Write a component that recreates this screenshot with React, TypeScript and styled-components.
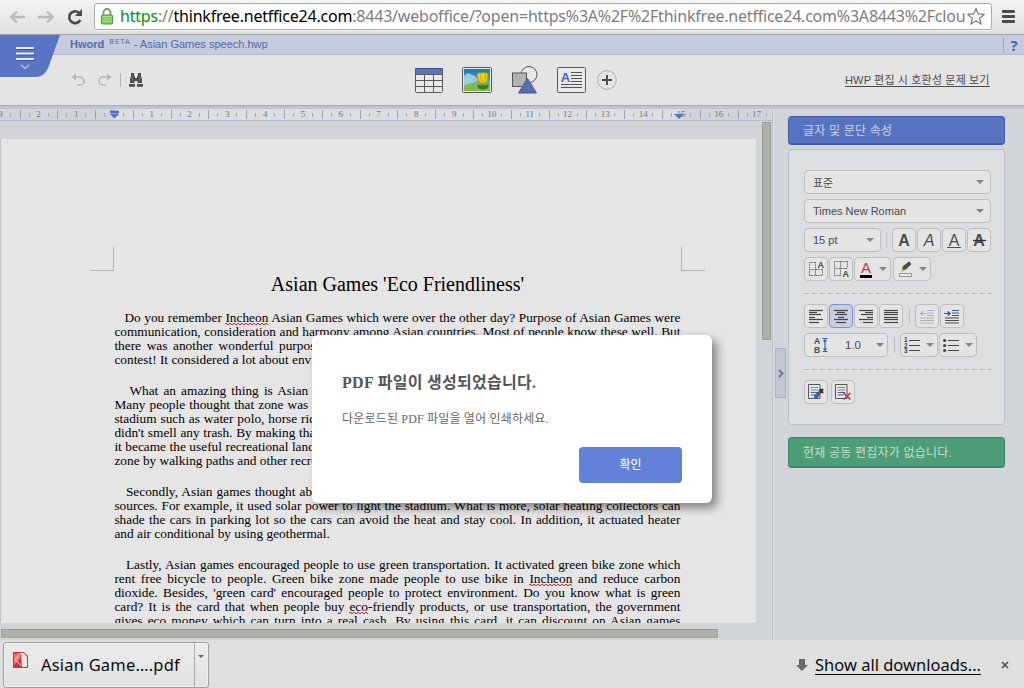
import React from "react";
import styled, { createGlobalStyle, css } from "styled-components";

const KR = `"Liberation Sans", "Noto Sans CJK KR", sans-serif`;

const Global = createGlobalStyle`
  * { box-sizing: border-box; }
  body { margin: 0; overflow: hidden; background: #d1d5d8; }
  svg { display: block; flex: none; }
`;

const Window = styled.div`
  width: 1024px;
  height: 688px;
  display: flex;
  flex-direction: column;
  overflow: hidden;
  position: relative;
  font-family: ${KR};
`;

/* ---------- browser bar ---------- */
const BrowserBar = styled.div`
  height: 35px;
  flex: none;
  display: flex;
  align-items: flex-start;
  padding: 3px 0 0 9px;
  background: linear-gradient(#f4f4f4, #dfdfdf);
  border-bottom: 1px solid #a7a7a7;
`;
const NavIcons = styled.div`
  display: flex;
  width: 85px;
  height: 28px;
  align-items: center;
  gap: 12px;
`;
const Address = styled.div`
  width: 898px;
  height: 27px;
  display: flex;
  align-items: center;
  border: 1px solid #a9a9a9;
  border-radius: 3px;
  background: #fff;
  padding: 0 2px 0 6px;
  box-shadow: 0 1px 0 #f5f5f5;
`;
const Url = styled.div`
  width: 846px;
  margin-left: 7px;
  overflow: hidden;
  white-space: nowrap;
  font: 16px/25px "Noto Sans", "Open Sans", sans-serif;
  letter-spacing: -0.21px;
  color: #7d7d7d;
`;
const Scheme = styled.span`color: #0a9208;`;
const Host = styled.span`color: #000;`;
const MenuBars = styled.div`
  display: flex;
  flex-direction: column;
  gap: 2px;
  margin: 7px 0 0 10px;
`;
const MenuBar = styled.i`
  width: 13px;
  height: 3px;
  border-radius: 1px;
  background: #4b4b4b;
`;

/* ---------- application head ---------- */
const Head = styled.div`
  height: 71px;
  flex: none;
  position: relative;
  background: #e4e4e4;
  border-bottom: 1px solid #a3abbb;
`;
const TitleBar = styled.div`
  height: 20px;
  display: flex;
  align-items: center;
  justify-content: space-between;
  padding-left: 70px;
  background: #c6cbdd;
  border-bottom: 1px solid #b2bbd1;
  color: #5369a8;
  font-size: 11px;
  line-height: 18px;
`;
const Title = styled.div`
  white-space: nowrap;
  padding-bottom: 1px;
`;
const Beta = styled.span`
  font: 7px/7px "DejaVu Sans", sans-serif;
  letter-spacing: 0.9px;
  vertical-align: 4px;
  margin: 0 0 0 2px;
`;
const Help = styled.div`
  width: 21px;
  height: 16px;
  border-left: 1px solid #9ba7c8;
  text-align: center;
  font: bold 15px/17px "Open Sans", sans-serif;
  color: #4560a8;
`;
const MenuTab = styled.div`
  position: absolute;
  left: 0;
  top: 0;
`;
const Tools = styled.div`
  height: 50px;
  display: flex;
  align-items: center;
  padding-left: 71px;
`;
const QuickTools = styled.div`
  display: flex;
  align-items: center;
  width: 344px;
`;
const InsertTools = styled.div`
  display: flex;
  align-items: center;
  width: 430px;
`;
const IssueLink = styled.span`
  font-size: 11px;
  line-height: 12px;
  letter-spacing: 0.15px;
  white-space: nowrap;
  color: #4d4d4d;
  border-bottom: 1px solid #4d4d4d;
`;

/* ---------- workspace ---------- */
const Workspace = styled.div`
  height: 534px;
  flex: none;
  display: flex;
  background: #d1d5d8;
  border-top: 3px solid #bfc6d1;
`;
const Editor = styled.div`
  width: 773px;
  border-right: 1px solid #b9bfca;
  display: flex;
  flex-direction: column;
`;
const Ruler = styled.div`
  height: 12px;
  flex: none;
  position: relative;
  overflow: hidden;
  border-bottom: 1px solid #b4bdd0;
  background: linear-gradient(90deg, #d1d5d8 114px, #dddee0 114px, #dddee0 680px, #d1d5d8 680px);
`;
const RulerTrack = styled.div`
  display: flex;
  margin-left: -18.3px;
  width: 900px;
`;
const RulerCell = styled.div`
  width: 37.8px;
  height: 11px;
  flex: none;
  display: flex;
  align-items: center;
  background: linear-gradient(#97a0b4, #97a0b4) 0 1px / 1px 9px no-repeat,
    linear-gradient(#a5adbd, #a5adbd) 9px 4px / 1px 4px no-repeat,
    linear-gradient(#a5adbd, #a5adbd) 28px 4px / 1px 4px no-repeat;
  font: 9px/11px "Liberation Serif", serif;
  color: #777;
`;
const RulerNumber = styled.span`width: 100%; text-align: center;`;
const RulerMark = styled.div<{ $x: number; $y?: number }>`
  position: absolute;
  left: ${(p) => p.$x}px;
  top: ${(p) => p.$y ?? 0}px;
`;
const Canvas = styled.div`
  flex: 1;
  display: flex;
  justify-content: space-between;
  min-height: 0;
`;
const Page = styled.div`
  width: 756px;
  height: 484px;
  margin-top: 18px;
  overflow: hidden;
  background: #e5e5e5;
  border-left: 1px solid #bcc3cf;
  padding: 108px 51px 0 89px;
  font: 13.333px/14px "Liberation Serif", serif;
  color: #000;
`;
const Corners = styled.div`
  display: flex;
  justify-content: space-between;
`;
const Corner = styled.i<{ $side: "left" | "right" }>`
  width: 24px;
  height: 24px;
  border-bottom: 1px solid #b2b2b2;
  ${(p) => (p.$side === "left" ? css`border-right: 1px solid #b2b2b2;` : css`border-left: 1px solid #b2b2b2;`)}
`;
const Heading = styled.div`
  font-size: 20px;
  line-height: 26px;
  text-align: center;
`;
const TextColumn = styled.div`
  width: 566px;
  margin: 14px 0 0 24.4px;
`;
const Paragraph = styled.div<{ $after: number }>`
  margin-bottom: ${(p) => p.$after}px;
`;
const Line = styled.div<{ $indent?: number; $gap?: number }>`
  height: 14px;
  white-space: nowrap;
  padding-left: ${(p) => p.$indent ?? 0}px;
  ${(p) => (p.$gap === undefined ? css`white-space: normal; text-align-last: justify;` : css`word-spacing: ${p.$gap}px;`)}
`;
const Misspelt = styled.span`
  background:
    linear-gradient(#d8232b, #d8232b) 0 calc(100% - 1px) / 4px 1px repeat-x,
    linear-gradient(90deg, #d8232b 2px, transparent 2px) 0 100% / 4px 1px repeat-x;
  background:
    linear-gradient(90deg, #d8232b 2px, transparent 2px) 0 calc(100% - 1px) / 4px 1px repeat-x,
    linear-gradient(90deg, transparent 2px, #d8232b 2px) 0 100% / 4px 1px repeat-x;
`;
const VScroll = styled.div`
  width: 9px;
  height: 218px;
  margin: 1px 1px 0 0;
  background: #aeb1a9;
  border: 1px solid #9a9d98;
`;
const HScroll = styled.div`
  width: 717px;
  height: 9px;
  flex: none;
  margin: 0 0 2px 1px;
  background: #aeb1a9;
  border: 1px solid #9a9d98;
  border-bottom-color: #a5a8a2;
`;

/* ---------- side panel ---------- */
const Side = styled.div`
  flex: 1;
  display: flex;
  border-left: 1px solid #e3e5e7;
`;
const Collapse = styled.div`
  width: 11px;
  height: 50px;
  margin: 239px 2px 0 1px;
  border: 1px solid #a9b3c9;
  background: #c0c7d3;
  display: flex;
  align-items: center;
  justify-content: center;
`;
const SideColumn = styled.div`
  width: 217px;
  padding-top: 7px;
`;
const Banner = styled.div<{ $tone: "blue" | "green" }>`
  border-radius: 4px;
  padding-left: 14px;
  font-size: 12px;
  letter-spacing: 0.2px;
  white-space: nowrap;
  ${(p) =>
    p.$tone === "blue"
      ? css`
          height: 29px;
          line-height: 28px;
          color: #ccd4ea;
          background: #5673c1;
          border: 1px solid #405aa5;
          border-bottom-width: 2px;
        `
      : css`
          height: 31px;
          line-height: 30px;
          color: #c3decf;
          background: #4d9e77;
          border: 1px solid #35866a;
          border-bottom-width: 2px;
        `}
`;
const Panel = styled.div`
  height: 276px;
  margin: 4px 0 12px;
  padding: 20px 12px 0 15px;
  border: 1px solid #b9bfca;
  border-radius: 4px;
  background: #dddee0;
`;
const Row = styled.div<{ $gap?: number }>`
  display: flex;
  gap: ${(p) => p.$gap ?? 1}px;
  height: 24px;
  margin-bottom: 5px;
`;
const Separator = styled.i<{ $pad: number }>`
  width: 1px;
  height: 16px;
  margin: 4px ${(p) => p.$pad}px;
  background: #b7bcc6;
`;
const Dashes = styled.div`
  height: 1px;
  margin: 12px 0 10px;
  background: repeating-linear-gradient(90deg, #b4bac6 0 5px, transparent 5px 8px);
`;
const Control = styled.div<{ $w?: number; $on?: boolean; $text?: boolean }>`
  width: ${(p) => p.$w ?? 24}px;
  height: 24px;
  flex: none;
  display: flex;
  align-items: center;
  justify-content: ${(p) => (p.$w ? "space-between" : "center")};
  padding: ${(p) => (p.$text ? "0 6px 0 8px" : p.$w ? "0 3px" : "0")};
  border: 1px solid ${(p) => (p.$on ? "#7b90d6" : "#bdbec0")};
  border-radius: 4px;
  background: ${(p) => (p.$on ? "#c9cfe2" : "#e4e4e4")};
  color: #4b4b4b;
  font-size: 11px;
  white-space: nowrap;
`;
const Arrow = styled.i`
  border: 4px solid transparent;
  border-top-color: #858585;
  border-bottom: 0;
`;

/* ---------- download shelf ---------- */
const Shelf = styled.div`
  flex: 1;
  display: flex;
  justify-content: space-between;
  background: #dfdfdf;
  padding: 2px 15px 0 3px;
  font: 16.5px/22px "Noto Sans", "Open Sans", sans-serif;
  color: #0c0c0c;
`;
const Download = styled.div`
  width: 206px;
  height: 46px;
  display: flex;
  border: 1px solid #9c9c9c;
  border-radius: 3px;
  background: linear-gradient(#ebebeb, #e2e2e2);
  box-shadow: inset 0 0 0 1px #f1f1f1;
`;
const FileName = styled.div`
  width: 191px;
  display: flex;
  gap: 13px;
  padding: 9px 0 0 9px;
  border-right: 1px solid #ababab;
  white-space: nowrap;
`;
const FileText = styled.span`
  padding-top: 2px;
  letter-spacing: 0.2px;
`;
const DownloadMore = styled.div`padding: 12px 0 0 3px;`;
const SmallArrow = styled.i`
  display: block;
  border: 3px solid transparent;
  border-top-color: #666;
  border-bottom: 0;
`;
const ShelfActions = styled.div`
  display: flex;
  align-items: center;
  height: 46px;
`;
const ShowAll = styled.span`
  margin: 0 20px 0 7px;
  line-height: 18px;
  white-space: nowrap;
  border-bottom: 1px solid #0c0c0c;
`;

/* ---------- dialog ---------- */
const Dialog = styled.div`
  position: absolute;
  left: 312px;
  top: 335px;
  width: 400px;
  height: 168px;
  padding: 36px 30px 20px;
  display: flex;
  flex-direction: column;
  border-radius: 6px;
  background: #fff;
  box-shadow: 5px 5px 10px rgba(0, 0, 0, 0.42);
  font-family: "Liberation Serif", "Noto Sans CJK KR", serif;
  color: #555;
  white-space: nowrap;
`;
const DialogTitle = styled.div`
  font-size: 16px;
  font-weight: bold;
  line-height: 24px;
  letter-spacing: 0.28px;
`;
const DialogText = styled.div`
  margin-top: 15px;
  font-size: 12px;
  line-height: 18px;
  letter-spacing: 0.18px;
  color: #666;
`;
const Confirm = styled.button`
  width: 103px;
  height: 36px;
  margin: auto 0 0 auto;
  padding: 1px 0 0;
  flex: none;
  border: 0;
  border-radius: 4px;
  background: #6282d9;
  color: #fff;
  font: 12px/35px ${KR};
`;

/* ---------- icons ---------- */
const NavArrow = ({ forward = false }: { forward?: boolean }) => (
  <svg width="17" height="16" viewBox="0 0 17 16" fill="none" stroke="#b9b9b9" strokeWidth="2.4">
    {forward ? <path d="M0 8h14M9 2.5 14.7 8 9 13.500" /> : <path d="M16 8H2M8 2.500 2.300 8 8 13.500" />}
  </svg>
);
const Reload = () => (
  <svg width="17" height="16" viewBox="0 0 17 16">
    <path d="M13.300 11A5.900 5.900 0 1 1 12 3.700" fill="none" stroke="#4d4d4d" strokeWidth="2.700" />
    <path d="M15 0v7H8z" fill="#4d4d4d" />
  </svg>
);
const Lock = () => (
  <svg width="12" height="17" viewBox="0 0 12 17">
    <path d="M2.500 8V4.500a3.500 3.500 0 0 1 7 0V8" fill="none" stroke="#8b8b8b" strokeWidth="1.800" />
    <rect x=".5" y="7" width="11" height="9" rx="1" fill="#82c95a" stroke="#509b37" />
    <path d="M1.500 8.500h9M1.500 11h9M1.500 13.500h9" stroke="#abdf86" />
  </svg>
);
const Star = () => (
  <svg width="20" height="20" viewBox="0 0 20 20" fill="#fff" stroke="#777" strokeWidth="1.200" strokeLinejoin="round">
    <path d="m10 1.500 2.300 5.400 5.900.5-4.500 3.900 1.400 5.800-5.100-3-5.100 3 1.400-5.800L1.800 7.400l5.900-.5z" />
  </svg>
);
const TabShape = () => (
  <svg width="61" height="42" viewBox="0 0 61 42">
    <path d="M0 0h60L48.500 32Q45 42 35 42H0z" fill="#5874c2" />
    <path d="M17 14h18M17 19.500h18M17 25h18" stroke="#3f5698" strokeWidth="2" />
    <path d="M16 13h18M16 18.500h18M16 24h18" stroke="#e5e9f4" strokeWidth="2" />
    <path d="m21 30 4 3.500 4-3.500" fill="none" stroke="#b8c4e6" strokeWidth="1.300" />
  </svg>
);
const Undo = ({ flip = false }: { flip?: boolean }) => (
  <svg width="14" height="14" viewBox="0 0 14 14">
    <g transform={flip ? "translate(14 0) scale(-1 1)" : undefined}>
      <path d="M3 4h6a4 4 0 0 1 0 8H6" fill="none" stroke="#b6b6b6" strokeWidth="1.500" />
      <path d="M5 .5v7L.5 4z" fill="#b6b6b6" />
    </g>
  </svg>
);
const Binoculars = () => (
  <svg width="14" height="14" viewBox="0 0 14 14" fill="#4b4b4b">
    <path d="M2 0h3v3h1v2h2V3h1V0h3v3l1 4v3H8.500V8h-3v2H1V7l1-4zM0 11h6v2.700H0zM8 11h6v2.700H8z" />
    <path d="M3.500 3v5M10.500 3v5" stroke="#777" strokeWidth=".7" />
  </svg>
);
const TableIcon = () => (
  <svg width="28" height="25" viewBox="0 0 28 25">
    <rect x=".5" y=".5" width="27" height="24" rx="1" fill="#e9e9e9" stroke="#5a5a5a" />
    <path d="M1 1h26v5.500H1z" fill="#5b76b5" />
    <path d="M.5 6.500h27M.5 12.500h27M.5 18.500h27M9.500 6.500v18M18.500 6.500v18" stroke="#5a5a5a" />
    <path d="M.5 6V.5h27V6" fill="none" stroke="#3e548d" />
  </svg>
);
const PictureIcon = () => (
  <svg width="30" height="26" viewBox="0 0 30 26">
    <defs>
      <linearGradient id="sky" x1="0" y1="0" x2="0" y2="1">
        <stop offset="0" stopColor="#1279b5" />
        <stop offset="1" stopColor="#82c4de" />
      </linearGradient>
    </defs>
    <rect x=".5" y=".5" width="29" height="25" rx="1" fill="#e8e8e8" stroke="#555" />
    <path d="M2 2h26v22H2z" fill="url(#sky)" />
    <path d="M2 9q4-5 8-1 5 1 6 6l-14 5z" fill="#9fcbe0" />
    <path d="M2 19q9-6 26-2v7H2z" fill="#82b84d" />
    <path d="M21 15v8M16 18q0 4 5 4 5 0 5-4-4 0-5 3-1-3-5-3" fill="#397d21" stroke="#397d21" strokeWidth="1.200" />
    <path d="M15 7q2-2 4-1 2-1 4 0 2-1 3 1l-.5 7-3 2.500h-3L16 14z" fill="#ecd10b" stroke="#a68500" strokeWidth=".7" />
    <path d="M18.500 7q0 7 2.500 8M23.500 7q0 7-2.500 8" fill="none" stroke="#c9a900" />
  </svg>
);
const ShapesIcon = () => (
  <svg width="26" height="28" viewBox="0 0 26 28">
    <circle cx="17" cy="8.500" r="8" fill="#e7e7e7" stroke="#555" />
    <rect x=".5" y="7" width="14" height="13.500" fill="#b1b1b1" stroke="#555" />
    <path d="M15.500 12.500 24.500 27h-18z" fill="#5870ad" stroke="#3d558f" />
  </svg>
);
const TextBoxIcon = () => (
  <svg width="29" height="26" viewBox="0 0 29 26">
    <rect x=".5" y=".5" width="28" height="25" rx="1" fill="#e8e8e8" stroke="#555" />
    <path d="M14 5.500h11M14 8.500h11M14 11.500h11M14 14.500h11M4 17.500h21M4 20.500h21" stroke="#555" />
    <text x="3.700" y="15" fontFamily="Liberation Sans, sans-serif" fontWeight="700" fontSize="13" fill="#4763b5">A</text>
  </svg>
);
const PlusIcon = () => (
  <svg width="20" height="20" viewBox="0 0 20 20" fill="none">
    <circle cx="10" cy="10" r="9.300" stroke="#aaa" />
    <path d="M10 5v10M5 10h10" stroke="#505050" strokeWidth="2" />
  </svg>
);
const LetterA = ({ kind }: { kind: "bold" | "italic" | "under" | "strike" }) => (
  <svg width="18" height="20" viewBox="0 0 18 20">
    <text
      x="9" y="16" textAnchor="middle" fontFamily="Liberation Sans, sans-serif" fontSize="16" fill="#4b4b4b"
      fontWeight={kind === "bold" || kind === "strike" ? 700 : 400}
      fontStyle={kind === "italic" ? "italic" : "normal"}
    >A</text>
    {kind === "under" && <path d="M2 17.500h14" stroke="#4b4b4b" />}
    {kind === "strike" && <path d="M3 10.500h13" stroke="#333" strokeWidth="1.300" />}
  </svg>
);
const GridA = ({ low = false }: { low?: boolean }) => (
  <svg width="18" height="18" viewBox="0 0 18 18">
    <g fill="none" stroke="#6e6e6e" strokeDasharray="1.500 .8">
      {low ? (
        <path d="M2.500 1v15M8.500 1v15M15.500 1v7M2 1.500h14M2 8.500h14M2 15.500h7" />
      ) : (
        <path d="M2.500 2v14M8.500 2v14M15.500 9v7M2 2.500h7M2 9.500h14M2 15.500h14" />
      )}
    </g>
    <text x="10.500" y={low ? 17 : 7.500} fontFamily="Liberation Sans, sans-serif" fontWeight="700" fontSize="9" fill="#4b4b4b">A</text>
  </svg>
);
const FontColor = () => (
  <svg width="16" height="19" viewBox="0 0 16 19">
    <text x="8" y="12.500" textAnchor="middle" fontFamily="Liberation Sans, sans-serif" fontSize="15" fill="#b03c40">A</text>
    <path d="M2 15h12v3H2z" fill="#000" />
  </svg>
);
const Highlighter = () => (
  <svg width="16" height="18" viewBox="0 0 16 18">
    <path d="M12 1.500 14.500 4 9 9.500l-3 .5-1-1 1-3z" fill="#4d4d4d" />
    <path d="M5 9.500 3 11.500h4l1-1z" fill="#8bdc5e" />
    <rect x="2.500" y="13.500" width="12" height="3" fill="#eee" stroke="#999" />
  </svg>
);
const AlignIcon = ({ kind }: { kind: "left" | "center" | "right" | "full" }) => {
  const widths = kind === "full" ? [14, 14, 14, 14, 14, 14] : [14, 8, 12, 6, 14, 10];
  return (
    <svg width="14" height="16" viewBox="0 0 14 16" stroke="#454545" strokeWidth="1.200">
      {widths.map((w, i) => {
        const x = kind === "right" ? 14 - w : kind === "center" ? (14 - w) / 2 : 0;
        return <path key={i} d={`M${x} ${Math.round(i * 2.4 + 1.5) + 0.5}h${w}`} />;
      })}
    </svg>
  );
};
const IndentIcon = ({ off = false }: { off?: boolean }) => {
  const ink = off ? "#b2b2b2" : "#454545";
  const blue = off ? "#aab3d0" : "#3d59a7";
  return (
    <svg width="16" height="16" viewBox="0 0 16 16">
      <path d="M8 2.500h7M8 5h7M8 7.500h7" stroke={blue} strokeWidth="1.200" />
      <path d="M1 10h14M1 12.500h14M1 15h14" stroke={ink} strokeWidth="1.200" />
      <path d={off ? "M7 5.500H2M3.500 3.500v4L1 5.500z" : "M0 5.500h5M4 3.500v4L6.500 5.500z"} fill={blue} stroke={blue} />
    </svg>
  );
};
const LineHeight = () => (
  <svg width="16" height="16" viewBox="0 0 16 16">
    <g fontFamily="Liberation Sans, sans-serif" fontWeight="700" fontSize="8.500" fill="#4b4b4b">
      <text x="0" y="7">A</text>
      <text x="0" y="15.500">B</text>
    </g>
    <path d="M8.500 1.500h5M8.500 14.500h5M11 2v12M9.500 4.500 11 3l1.500 1.500M9.500 11.500 11 13l1.500-1.500" fill="none" stroke="#3f60a9" strokeWidth="1.200" />
  </svg>
);
const ListIcon = ({ numbered = false }: { numbered?: boolean }) => (
  <svg width="17" height="16" viewBox="0 0 17 16">
    <path d="M5 3.500h11M5 8.500h11M5 13.500h11" stroke="#454545" />
    {numbered ? (
      <g fontFamily="Liberation Sans, sans-serif" fontWeight="700" fontSize="6.500" fill="#454545">
        <text x="0" y="5">1</text><text x="0" y="10.500">2</text><text x="0" y="16">3</text>
      </g>
    ) : (
      <g fill="#454545"><circle cx="1.600" cy="3.500" r="1.600" /><circle cx="1.600" cy="8.500" r="1.600" /><circle cx="1.600" cy="13.500" r="1.600" /></g>
    )}
  </svg>
);
const StyleDoc = ({ remove = false }: { remove?: boolean }) => (
  <svg width="18" height="18" viewBox="0 0 18 18">
    <path d="M1.500 1.500h11.500v14H1.500z" fill="#e8e8e8" stroke="#555" />
    <path d="M3.500 4.500h7.500M3.500 7h7.500" stroke="#888" />
    <path d="M3.500 9.500h7.500M3.500 12h6" stroke="#4662ae" />
    {remove ? (
      <path d="m9.500 10 7 6.500M16.500 10l-7 6.500" stroke="#b43b3f" strokeWidth="1.700" />
    ) : (
      <>
        <path d="m10.500 11.500 3-3" stroke="#555" strokeWidth="3" />
        <path d="m12.500 6.500 3.500 3.500M14 8l2-2" stroke="#333" strokeWidth="2.400" />
        <path d="m9.500 10 3 3-2.500 2.500H7V13z" fill="#3e5eac" />
      </>
    )}
  </svg>
);
const Chevron = () => (
  <svg width="6" height="9" viewBox="0 0 6 9"><path d="m1 1 3.500 3.500L1 8" fill="none" stroke="#6f7c98" strokeWidth="2" /></svg>
);
const PdfFile = () => (
  <svg width="15" height="17" viewBox="0 0 15 17">
    <path d="M0 0h11l4 4v12H0z" fill="#c8373d" />
    <path d="M8 1h3l3 4v10H9z" fill="#e9e9e9" />
    <path d="M1 2 7 1v6L1 13z" fill="#e87672" />
    <path d="M8 1 2 7.500l6 6" fill="none" stroke="#f9dddd" />
  </svg>
);
const DownArrow = () => (
  <svg width="12" height="12" viewBox="0 0 12 12"><path d="M3 0h6v6h3l-6 6-6-6h3z" fill="#676767" /></svg>
);
const CloseIcon = () => (
  <svg width="8" height="8" viewBox="0 0 8 8"><path d="m1 1 6 6M7 1 1 7" stroke="#555" strokeWidth="1.700" /></svg>
);
const ToolSlot = styled.span<{ $after: number }>`margin-right: ${(p) => p.$after}px;`;
const QuickDivider = styled.i`
  width: 1px;
  height: 14px;
  background: #b5b5b5;
  margin-right: 8px;
`;
const Spacing = styled.span`
  display: flex;
  align-items: center;
  gap: 15px;
  padding-left: 6px;
  font-size: 11.5px;
`;

const rulerNumbers = [3, 2, 1, "", ...Array.from({ length: 17 }, (_, i) => i + 1)];

export default function App() {
  return (
    <Window>
      <Global />
      <BrowserBar>
        <NavIcons><NavArrow /><NavArrow forward /><Reload /></NavIcons>
        <Address>
          <Lock />
          <Url><Scheme>https</Scheme>://<Host>thinkfree.netffice24.com</Host>:8443/weboffice/?open=https%3A%2F%2Fthinkfree.netffice24.com%3A8443%2Fcloud</Url>
          <Star />
        </Address>
        <MenuBars><MenuBar /><MenuBar /><MenuBar /></MenuBars>
      </BrowserBar>

      <Head>
        <TitleBar>
          <Title><b>Hword</b> <Beta>BETA</Beta> - Asian Games speech.hwp</Title>
          <Help>?</Help>
        </TitleBar>
        <MenuTab><TabShape /></MenuTab>
        <Tools>
          <QuickTools>
            <ToolSlot $after={13}><Undo /></ToolSlot>
            <ToolSlot $after={8}><Undo flip /></ToolSlot>
            <QuickDivider />
            <Binoculars />
          </QuickTools>
          <InsertTools>
            <ToolSlot $after={19}><TableIcon /></ToolSlot>
            <ToolSlot $after={20}><PictureIcon /></ToolSlot>
            <ToolSlot $after={19}><ShapesIcon /></ToolSlot>
            <ToolSlot $after={11}><TextBoxIcon /></ToolSlot>
            <PlusIcon />
          </InsertTools>
          <IssueLink>HWP 편집 시 호환성 문제 보기</IssueLink>
        </Tools>
      </Head>

      <Workspace>
        <Editor>
          <Ruler>
            <RulerTrack>
              {rulerNumbers.map((n, i) => <RulerCell key={i}><RulerNumber>{n}</RulerNumber></RulerCell>)}
            </RulerTrack>
            <RulerMark $x={110}>
              <svg width="9" height="10" viewBox="0 0 10 10"><path d="M0 1h10v4L5 10 0 5z" fill="#5571c4" /><path d="M0 4.500h10" stroke="#c4cce3" strokeDasharray="2 1" /></svg>
            </RulerMark>
            <RulerMark $x={674} $y={5}>
              <svg width="10" height="5" viewBox="0 0 10 5"><path d="M0 0h10L5 5z" fill="#5571c4" /></svg>
            </RulerMark>
          </Ruler>
          <Canvas>
            <Page>
              <Corners><Corner $side="left" /><Corner $side="right" /></Corners>
              <Heading>Asian Games 'Eco Friendliness'</Heading>
              <TextColumn>
                <Paragraph $after={17}>
                  <Line $indent={10}>Do you remember <Misspelt>Incheon</Misspelt> Asian Games which were over the other day? Purpose of Asian Games were</Line>
                  <Line>communication, consideration and harmony among Asian countries. Most of people know these well. But</Line>
                  <Line $gap={2.3}>there was another wonderful purpose of this sports</Line>
                  <Line $gap={0}>contest! It considered a lot about environment.</Line>
                </Paragraph>
                <Paragraph $after={17}>
                  <Line $indent={15} $gap={1.8}>What an amazing thing is Asian Games zone.</Line>
                  <Line $gap={0.8}>Many people thought that zone was a landfill.</Line>
                  <Line $gap={0.58}>stadium such as water polo, horse riding</Line>
                  <Line $gap={0.33}>didn't smell any trash. By making that zone,</Line>
                  <Line $gap={0.2}>it became the useful recreational land and</Line>
                  <Line $gap={0}>zone by walking paths and other recreation.</Line>
                </Paragraph>
                <Paragraph $after={17}>
                  <Line $indent={11.5} $gap={0.8}>Secondly, Asian games thought about energy</Line>
                  <Line>sources. For example, it used solar power to light the stadium. What is more, solar heating collectors can</Line>
                  <Line>shade the cars in parking lot so the cars can avoid the heat and stay cool. In addition, it actuated heater</Line>
                  <Line $gap={0}>and air conditional by using geothermal.</Line>
                </Paragraph>
                <Paragraph $after={0}>
                  <Line $indent={11.5}>Lastly, Asian games encouraged people to use green transportation. It activated green bike zone which</Line>
                  <Line>rent free bicycle to people. Green bike zone made people to use bike in <Misspelt>Incheon</Misspelt> and reduce carbon</Line>
                  <Line>dioxide. Besides, 'green card' encouraged people to protect environment. Do you know what is green</Line>
                  <Line>card? It is the card that when people buy <Misspelt>eco</Misspelt>-friendly products, or use transportation, the government</Line>
                  <Line>gives eco money which can turn into a real cash. By using this card, it can discount on Asian games</Line>
                </Paragraph>
              </TextColumn>
            </Page>
            <VScroll />
          </Canvas>
          <HScroll />
        </Editor>
        <Side>
          <Collapse><Chevron /></Collapse>
          <SideColumn>
            <Banner $tone="blue">글자 및 문단 속성</Banner>
            <Panel>
              <Row><Control $w={187} $text>표준<Arrow /></Control></Row>
              <Row><Control $w={187} $text>Times New Roman<Arrow /></Control></Row>
              <Row>
                <Control $w={77} $text>15 pt<Arrow /></Control>
                <Separator $pad={4} />
                <Control><LetterA kind="bold" /></Control>
                <Control><LetterA kind="italic" /></Control>
                <Control><LetterA kind="under" /></Control>
                <Control><LetterA kind="strike" /></Control>
              </Row>
              <Row>
                <Control><GridA /></Control>
                <Control><GridA low /></Control>
                <Control $w={37}><FontColor /><Arrow /></Control>
                <ToolSlot $after={0} />
                <Control $w={38}><Highlighter /><Arrow /></Control>
              </Row>
              <Dashes />
              <Row>
                <Control><AlignIcon kind="left" /></Control>
                <Control $on><AlignIcon kind="center" /></Control>
                <Control><AlignIcon kind="right" /></Control>
                <Control><AlignIcon kind="full" /></Control>
                <Separator $pad={4.5} />
                <Control><IndentIcon off /></Control>
                <Control><IndentIcon /></Control>
              </Row>
              <Row>
                <Control $w={84}><Spacing><LineHeight />1.0</Spacing><Arrow /></Control>
                <Separator $pad={4.5} />
                <Control $w={38}><ListIcon numbered /><Arrow /></Control>
                <Control $w={38}><ListIcon /><Arrow /></Control>
              </Row>
              <Dashes />
              <Row $gap={3}>
                <Control><StyleDoc /></Control>
                <Control><StyleDoc remove /></Control>
              </Row>
            </Panel>
            <Banner $tone="green">현재 공동 편집자가 없습니다.</Banner>
          </SideColumn>
        </Side>
      </Workspace>

      <Shelf>
        <Download>
          <FileName><PdfFile /><FileText>Asian Game….pdf</FileText></FileName>
          <DownloadMore><SmallArrow /></DownloadMore>
        </Download>
        <ShelfActions>
          <DownArrow />
          <ShowAll>Show all downloads...</ShowAll>
          <CloseIcon />
        </ShelfActions>
      </Shelf>

      <Dialog>
        <DialogTitle>PDF 파일이 생성되었습니다.</DialogTitle>
        <DialogText>다운로드된 PDF 파일을 열어 인쇄하세요.</DialogText>
        <Confirm>확인</Confirm>
      </Dialog>
    </Window>
  );
}
